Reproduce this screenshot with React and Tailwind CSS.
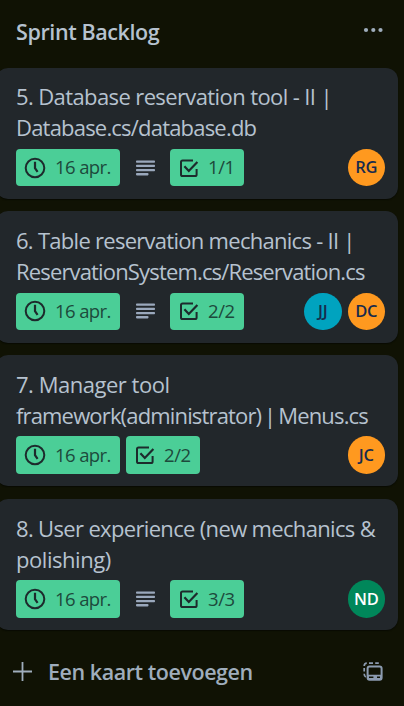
const FONT = 'font-["Segoe_UI","Open_Sans","Noto_Sans",sans-serif]';

const cards = [
  {
    lines: [
      { text: "5. Database reservation tool - II |", tracking: "tracking-[-0.61px]" },
      { text: "Database.cs/database.db", tracking: "tracking-[-0.8px]" },
    ],
    description: true,
    checks: "1/1",
    members: [{ name: "RG", color: "bg-[#ff991f] text-[#172b4d]" }],
  },
  {
    lines: [
      { text: "6. Table reservation mechanics - II |", tracking: "tracking-[-0.72px]" },
      { text: "ReservationSystem.cs/Reservation.cs", tracking: "tracking-[-0.84px]" },
    ],
    description: true,
    checks: "2/2",
    members: [
      { name: "JJ", color: "bg-[#00a3bf] text-[#172b4d]" },
      { name: "DC", color: "bg-[#ff991f] text-[#172b4d]" },
    ],
  },
  {
    lines: [
      { text: "7. Manager tool", tracking: "tracking-[-0.48px]" },
      { text: "framework(administrator) | Menus.cs", tracking: "tracking-[-0.84px] [word-spacing:-2px]" },
    ],
    description: false,
    checks: "2/2",
    members: [{ name: "JC", color: "bg-[#ff991f] text-[#172b4d]" }],
  },
  {
    lines: [
      { text: "8. User experience (new mechanics &", tracking: "tracking-[-0.66px]" },
      { text: "polishing)", tracking: "tracking-[-0.45px]" },
    ],
    description: true,
    checks: "3/3",
    members: [{ name: "ND", color: "bg-[#00875a] text-white" }],
  },
];

function ClockIcon() {
  return (
    <svg width="22" height="22" viewBox="0 0 22 22" fill="none" stroke="#1d2a2c" strokeWidth="2" className="shrink-0">
      <circle cx="11" cy="11" r="9.3" />
      <path d="M11 4.8v6.4l2.6 3.6" strokeWidth="2.2" />
    </svg>
  );
}

function CheckIcon() {
  return (
    <svg width="20" height="20" viewBox="0 0 20 20" fill="none" stroke="#1d2a2c" strokeWidth="2" className="shrink-0">
      <path d="M14 2.5H3.6Q2 2.5 2 4v12.4Q2 18 3.6 18H16q1.6 0 1.6-1.6V11" />
      <path d="M5.4 8.2l4.4 4.8L18.4 4" strokeWidth="2.2" />
    </svg>
  );
}

function DescriptionIcon() {
  return (
    <svg width="19" height="16" viewBox="0 0 19 16" fill="#9aa8bc" className="shrink-0">
      <rect y="0.5" width="19" height="2.3" rx="0.8" />
      <rect y="4.7" width="19" height="2.3" rx="0.8" />
      <rect y="8.9" width="19" height="2.3" rx="0.8" />
      <rect y="13.1" width="12.5" height="2.3" rx="0.8" />
    </svg>
  );
}

function TemplateIcon() {
  return (
    <svg width="20" height="20" viewBox="0 0 20 20" fill="none" stroke="#8c9bb0" strokeWidth="2" className="shrink-0">
      <rect x="4.6" y="4.6" width="14" height="13.2" rx="2" />
      <path d="M4.6 12.8h14v3q0 2-2 2h-10q-2 0-2-2z" fill="#8c9bb0" stroke="none" />
      <path d="M6 14.5h4.4v1.5H6zM14 14.5h3v1.5h-3z" fill="#101204" stroke="none" />
      <path d="M1.2 4Q1.2 1.2 3.8 1.2M6 1.2h4M12.2 1.2h3.6M1.2 6v3.6M1.2 11.8q0 2.6 1.6 3.2" strokeWidth="1.7" />
    </svg>
  );
}

function Card({ card }) {
  return (
    <article className="-ml-1 flex h-[131.3px] w-[401.5px] flex-col rounded-xl bg-[#22272b] pt-[13.9px] pr-[12.5px] pl-5 shadow-[0_1px_1px_#090b03]">
      <h3 className="h-[67.5px] text-[22px] leading-[31px] whitespace-nowrap text-[#b6c2cf]">
        {card.lines.map((line) => (
          <span key={line.text} className={`block ${line.tracking}`}>{line.text}</span>
        ))}
      </h3>
      <div className="flex items-center gap-[6px]">
        <span className="flex h-[37.5px] w-[104px] items-center rounded bg-[#4bce97] pl-2 text-[#1d4a3c]">
          <ClockIcon />
          <span className="ml-[9px] text-[18.5px] leading-none tracking-[-0.6px] whitespace-nowrap">16 apr.</span>
        </span>
        {card.description && (
          <span className="flex w-[38px] justify-center">
            <DescriptionIcon />
          </span>
        )}
        <span className="flex h-[37.5px] w-[74px] items-center rounded bg-[#4bce97] pl-[9px] text-[#1d4a3c]">
          <CheckIcon />
          <span className="ml-[9px] text-[18.5px] leading-none tracking-[-0.4px]">{card.checks}</span>
        </span>
        <div className="ml-auto flex gap-[6px]">
          {card.members.map((m) => (
            <span key={m.name} className={`flex size-[37.5px] items-center justify-center rounded-full text-[16.5px] leading-none font-semibold tracking-[-0.2px] ${m.color}`}>
              {m.name}
            </span>
          ))}
        </div>
      </div>
    </article>
  );
}

export default function App() {
  return (
    <main className={`h-[706px] w-[404px] overflow-hidden bg-[#101204] text-[#b6c2cf] ${FONT}`}>
      <header className="flex h-[67.5px] items-start justify-between pt-4 pr-[21px] pl-4">
        <h2 className="text-[21.5px] leading-[31px] font-semibold tracking-[-0.4px]">Sprint Backlog</h2>
        <svg width="20" height="6" viewBox="0 0 20 6" fill="#9fadbc" className="mt-[11px]">
          <circle cx="3" cy="3" r="2.1" />
          <circle cx="10.3" cy="3" r="2.1" />
          <circle cx="17.5" cy="3" r="2.1" />
        </svg>
      </header>
      <section className="flex flex-col gap-[12.5px]">
        {cards.map((card) => (
          <Card key={card.checks + card.lines[0].text} card={card} />
        ))}
      </section>
      <footer className="flex h-[76px] items-center pt-[7px] pr-[21px] pl-[13px] text-[#9fadbc]">
        <svg width="19" height="19" viewBox="0 0 19 19" stroke="#9fadbc" strokeWidth="1.8" className="shrink-0">
          <path d="M9.5 0v19M0 9.5h19" />
        </svg>
        <span className="ml-4 text-[21.5px] leading-[31px] font-semibold tracking-[-0.45px]">Een kaart toevoegen</span>
        <span className="ml-auto">
          <TemplateIcon />
        </span>
      </footer>
    </main>
  );
}
